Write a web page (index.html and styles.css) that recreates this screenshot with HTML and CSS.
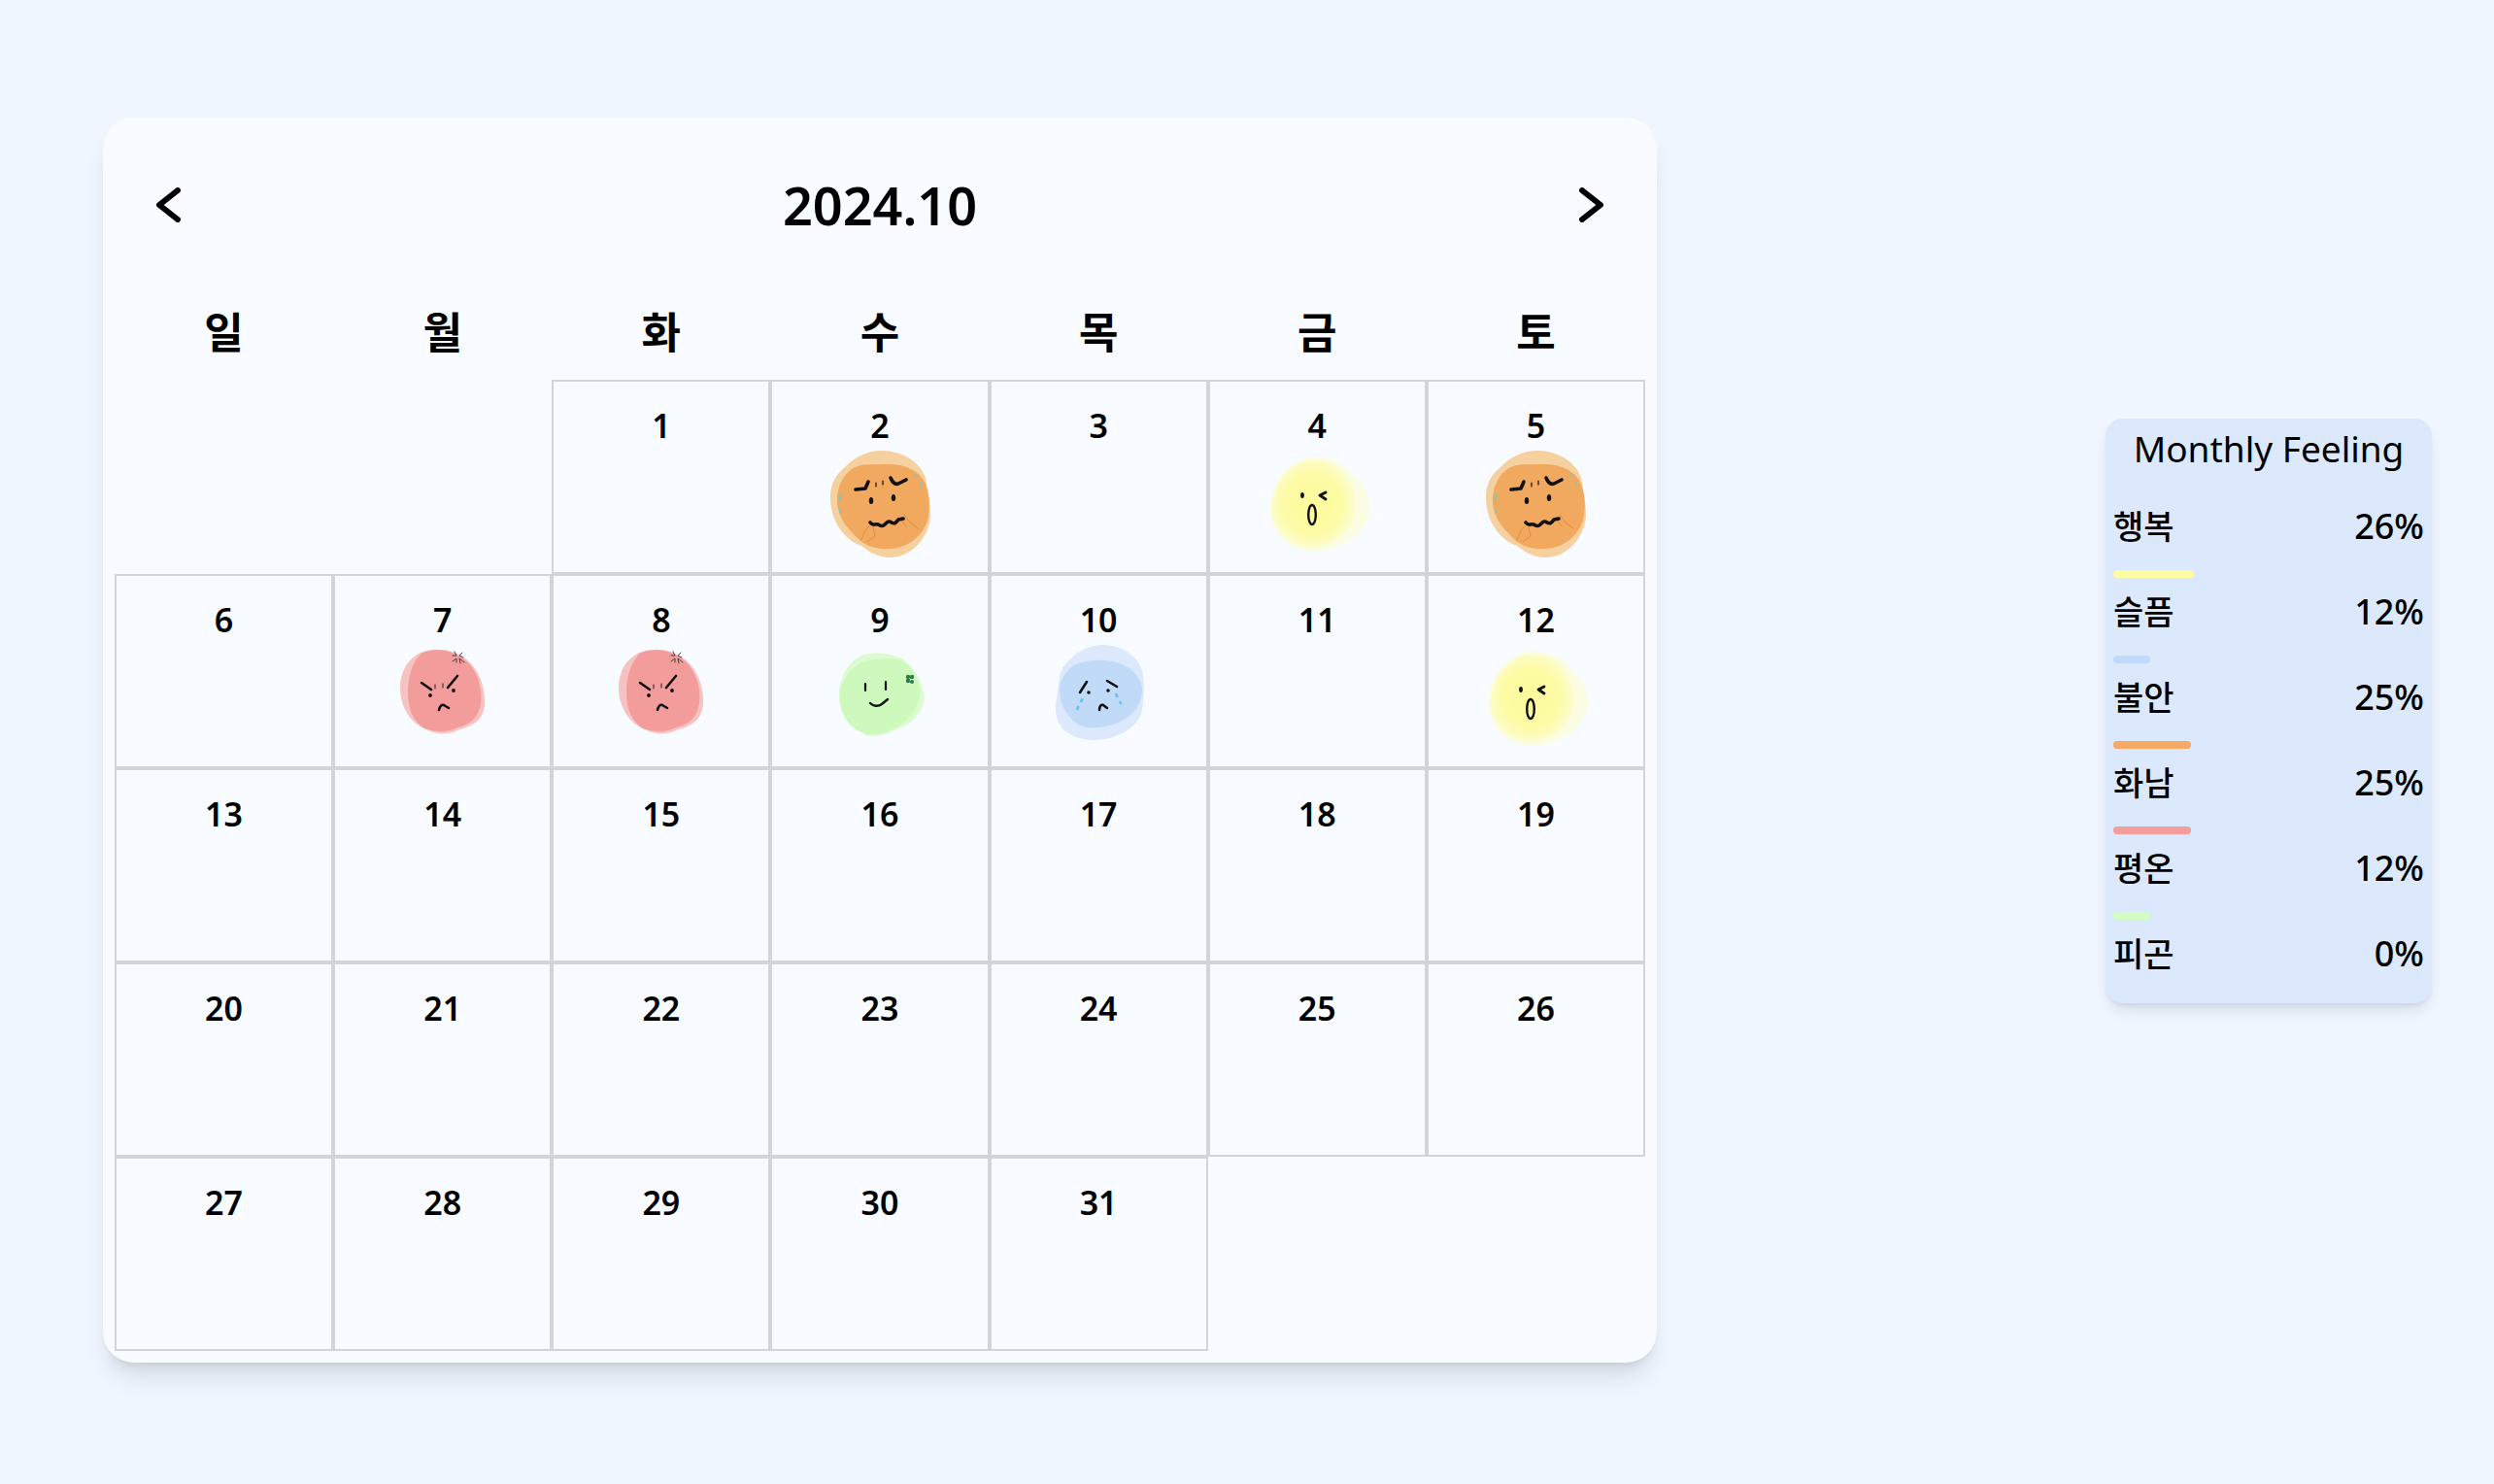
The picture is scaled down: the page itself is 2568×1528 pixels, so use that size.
FILE: index.html
```html
<!DOCTYPE html>
<html lang="ko">
<head>
<meta charset="utf-8">
<title>Monthly Feeling</title>
<link rel="stylesheet" href="styles.css">
</head>
<body>
<svg class="defs" width="0" height="0" aria-hidden="true">
  <defs>
    <radialGradient id="yellowGlow" cx="48%" cy="50%" r="55%">
      <stop offset="0" stop-color="#fdfb9e"/>
      <stop offset="0.6" stop-color="#fdfba4"/>
      <stop offset="0.85" stop-color="#fdfcc4"/>
      <stop offset="1" stop-color="#fbfde8"/>
    </radialGradient>
    <symbol id="f-anxious" viewBox="0 0 110 110">
      <path fill="#f6d09f" d="M57 0C78 0 97 12 102 28C104 40 107 52 107 68C106 88 88 110 66 110C52 110 44 104 36 98C18 92 4 72 4 48C4 34 10 24 19 17C30 6 42 0 57 0Z"/>
      <path fill="#f1a85f" d="M60 14C80 13 96 20 102 34C106 46 107 58 104 72C98 90 82 100 66 101C50 102 38 98 28 86C16 74 10 62 11 48C12 34 20 20 32 16C42 13 50 15 60 14Z"/>
      <g fill="none" stroke="#e08c3e" stroke-width="1" stroke-linecap="round">
        <path d="M36 92L40 82L44 78M42 94L50 88L48 78"/>
        <path d="M80 66L86 74L94 80M76 70L82 78"/>
      </g>
      <g fill="none" stroke="#111" stroke-linecap="round" stroke-linejoin="round">
        <path stroke-width="3.6" d="M30 40L40 39L43 32"/>
        <path stroke-width="3.6" d="M66 28C68 33 71 35 74 34L82 30"/>
        <path stroke-width="1.2" d="M51 33V37M58 31V35"/>
        <path stroke-width="3.6" d="M45 74C48 78 50 75 53 76S57 79 60 76S64 72 67 74S72 74 74 71L79 70"/>
      </g>
      <ellipse cx="46" cy="51.500" rx="2.200" ry="3.600" fill="#111"/>
      <ellipse cx="69" cy="48.500" rx="2.200" ry="3.600" fill="#111"/>
      <g fill="none" stroke="#7cc9cb" stroke-width="1.600" stroke-linecap="round">
        <path d="M15 45L13 52M14 61V64M91 25L93 27M97 33L98 36"/>
      </g>
    </symbol>
    <symbol id="f-happy" viewBox="0 0 110 110">
      <path fill="#fbfde2" d="M40 9C56 3 78 8 92 24C102 34 110 46 109 64C106 80 92 92 78 98C64 106 38 106 26 96C12 86 6 72 7 56C8 34 22 16 40 9Z"/>
      <path fill="url(#yellowGlow)" d="M40 11C56 5 76 10 84 24C94 36 98 50 94 68C90 84 72 96 54 100C36 102 18 90 10 72C4 50 18 20 40 11Z"/>
      <ellipse cx="40" cy="46" rx="1.900" ry="3" fill="#111"/>
      <path fill="none" stroke="#111" stroke-width="2.800" stroke-linecap="round" stroke-linejoin="round" d="M64 43L58 46L64 50"/>
      <ellipse cx="50" cy="66" rx="3.800" ry="10" fill="none" stroke="#111" stroke-width="2.400"/>
    </symbol>
    <symbol id="f-angry" viewBox="0 0 110 110">
      <path fill="#f6c3c2" d="M32 8C48 2 64 4 78 14C92 24 99 44 98 60C98 76 86 84 72 87C60 94 44 92 32 84C18 76 11 60 11 44C11 26 20 14 32 8Z"/>
      <path fill="#f29d9b" d="M34 8C48 3 64 5 76 14C90 24 96 44 94 60C92 74 84 82 70 85C60 90 48 90 36 86C24 78 19 66 19 48C19 32 24 16 34 8Z"/>
      <g fill="none" stroke="#111" stroke-linecap="round" stroke-linejoin="round">
        <path stroke-width="2.600" d="M33 39L43 46M60 44L70 32"/>
        <path stroke-width="0.900" d="M47 41V45M55 40V44"/>
        <path stroke-width="2.600" d="M51 67C52 63 54 61 56 62L61 65"/>
        <path stroke-width="0.900" stroke="#333" d="M67 7L69 11L65 11M75 8L72 11L76 13M65 17L69 14L69 18M77 18L72 14L73 19"/>
      </g>
      <circle cx="42" cy="52" r="1.900" fill="#111"/>
      <circle cx="66" cy="47" r="1.900" fill="#111"/>
    </symbol>
    <symbol id="f-calm" viewBox="0 0 110 110">
      <path fill="#dcfbd1" d="M36 11C48 6 64 8 78 14C90 22 100 40 101 54C100 70 88 82 70 88C58 94 46 96 36 90C22 84 13 70 13 52C13 34 22 18 36 11Z"/>
      <path fill="#cdf9bc" d="M36 18C46 14 56 15 64 14C78 12 90 24 96 42C98 58 92 72 74 84C58 92 46 96 36 90C22 84 14 70 14 54C14 38 24 24 36 18Z"/>
      <g fill="none" stroke="#111" stroke-linecap="round" stroke-linejoin="round">
        <path stroke-width="2.200" d="M40 40V47M61 38V46"/>
        <path stroke-width="2.400" d="M45 60C48 63 53 64 57 61L63 56"/>
      </g>
      <g fill="#2f7a4f">
        <circle cx="84" cy="33" r="2.200"/>
        <circle cx="88" cy="33" r="2.200"/>
        <circle cx="84" cy="37" r="2.200"/>
        <circle cx="88" cy="38" r="2"/>
      </g>
    </symbol>
    <symbol id="f-sad" viewBox="0 0 110 110">
      <path fill="#dce9fc" d="M56 0C74 -1 94 8 100 26C103 40 102 54 100 66C98 82 82 92 66 96C50 100 32 98 20 88C12 80 9 68 12 56C14 44 14 32 18 24C28 10 40 2 56 0Z"/>
      <path fill="#c0daf8" d="M30 21C42 15 56 15 70 17C86 20 98 32 100 44C100 60 94 70 78 79C62 86 46 88 34 82C22 74 15 60 15 46C15 36 22 26 30 21Z"/>
      <g fill="none" stroke="#111" stroke-linecap="round" stroke-linejoin="round">
        <path stroke-width="2.600" d="M43 38L36 49M64 37L74 43"/>
        <path stroke-width="2.600" d="M56 67C56 63 58 61 60 62L64 65"/>
      </g>
      <circle cx="45" cy="49" r="1.800" fill="#111"/>
      <circle cx="65" cy="47" r="1.800" fill="#111"/>
      <g fill="none" stroke="#63c4ec" stroke-width="2.600">
        <path d="M38.500 55L37 59M34.500 63L33 67M73 50L74.500 54M77 58L78.500 61"/>
      </g>
    </symbol>
  </defs>
</svg>

<main class="calendar">
  <header class="cal-head">
    <span class="nav-arrow"><svg viewBox="0 0 28 36" width="28" height="36"><path d="M24 3L5 18L24 33"/></svg></span>
    <h1 class="cal-title">2024.10</h1>
    <span class="nav-arrow"><svg viewBox="0 0 28 36" width="28" height="36"><path d="M4 3L23 18L4 33"/></svg></span>
  </header>
  <div class="week">
    <div class="week-day">일</div><div class="week-day">월</div><div class="week-day">화</div><div class="week-day">수</div><div class="week-day">목</div><div class="week-day">금</div><div class="week-day">토</div>
  </div>
  <div class="days">
    <div class="day day-empty"></div>
    <div class="day day-empty"></div>
    <div class="day"><span class="num">1</span></div>
    <div class="day"><span class="num">2</span><svg class="face"><use href="#f-anxious"/></svg></div>
    <div class="day"><span class="num">3</span></div>
    <div class="day"><span class="num">4</span><svg class="face"><use href="#f-happy"/></svg></div>
    <div class="day"><span class="num">5</span><svg class="face"><use href="#f-anxious"/></svg></div>
    <div class="day"><span class="num">6</span></div>
    <div class="day"><span class="num">7</span><svg class="face"><use href="#f-angry"/></svg></div>
    <div class="day"><span class="num">8</span><svg class="face"><use href="#f-angry"/></svg></div>
    <div class="day"><span class="num">9</span><svg class="face"><use href="#f-calm"/></svg></div>
    <div class="day"><span class="num">10</span><svg class="face"><use href="#f-sad"/></svg></div>
    <div class="day"><span class="num">11</span></div>
    <div class="day"><span class="num">12</span><svg class="face"><use href="#f-happy"/></svg></div>
    <div class="day"><span class="num">13</span></div>
    <div class="day"><span class="num">14</span></div>
    <div class="day"><span class="num">15</span></div>
    <div class="day"><span class="num">16</span></div>
    <div class="day"><span class="num">17</span></div>
    <div class="day"><span class="num">18</span></div>
    <div class="day"><span class="num">19</span></div>
    <div class="day"><span class="num">20</span></div>
    <div class="day"><span class="num">21</span></div>
    <div class="day"><span class="num">22</span></div>
    <div class="day"><span class="num">23</span></div>
    <div class="day"><span class="num">24</span></div>
    <div class="day"><span class="num">25</span></div>
    <div class="day"><span class="num">26</span></div>
    <div class="day"><span class="num">27</span></div>
    <div class="day"><span class="num">28</span></div>
    <div class="day"><span class="num">29</span></div>
    <div class="day"><span class="num">30</span></div>
    <div class="day"><span class="num">31</span></div>
    <div class="day day-empty"></div>
    <div class="day day-empty"></div>
  </div>
</main>

<aside class="stats">
  <h2 class="stats-title">Monthly Feeling</h2>
  <div class="stat"><div class="stat-line"><span>행복</span><span class="pct">26%</span></div><div class="bar bar-happy" style="width:26%"></div></div>
  <div class="stat"><div class="stat-line"><span>슬픔</span><span class="pct">12%</span></div><div class="bar bar-sad" style="width:12%"></div></div>
  <div class="stat"><div class="stat-line"><span>불안</span><span class="pct">25%</span></div><div class="bar bar-anxious" style="width:25%"></div></div>
  <div class="stat"><div class="stat-line"><span>화남</span><span class="pct">25%</span></div><div class="bar bar-angry" style="width:25%"></div></div>
  <div class="stat"><div class="stat-line"><span>평온</span><span class="pct">12%</span></div><div class="bar bar-calm" style="width:12%"></div></div>
  <div class="stat stat-last"><div class="stat-line"><span>피곤</span><span class="pct">0%</span></div></div>
</aside>
</body>
</html>
```

FILE: styles.css
```css
* { box-sizing: border-box; }

html, body { margin: 0; padding: 0; }

body {
  min-height: 100vh;
  background: #eff6ff;
  color: #000;
  font-family: "Noto Sans", "Noto Sans CJK KR", sans-serif;
  display: flex;
  justify-content: space-between;
  align-items: flex-start;
  padding: 121px 64px 0 106px;
  overflow: hidden;
}

.defs { position: absolute; }

.calendar {
  width: 1600px;
  height: 1282px;
  padding: 0 12px 12px;
  background: #f8fbff;
  border-radius: 32px;
  box-shadow: 0 20px 25px -5px rgba(0, 0, 0, 0.1), 0 8px 10px -6px rgba(0, 0, 0, 0.1);
}

.cal-head {
  height: 180px;
  display: flex;
  align-items: center;
  justify-content: space-between;
  padding: 0 41px;
}

.nav-arrow { display: flex; }

.nav-arrow svg path {
  fill: none;
  stroke: #000;
  stroke-width: 6;
  stroke-linecap: round;
  stroke-linejoin: round;
}

.cal-title {
  margin: 0;
  font-size: 54px;
  font-weight: 600;
  line-height: 1.5;
}

.week {
  display: grid;
  grid-template-columns: repeat(7, 1fr);
  height: 90px;
  padding-bottom: 12px;
}

.week-day {
  display: flex;
  align-items: center;
  justify-content: center;
  font-family: "Noto Sans CJK KR", sans-serif;
  font-size: 44px;
  font-weight: 700;
}

.days {
  display: grid;
  grid-template-columns: repeat(7, 1fr);
  grid-auto-rows: 200px;
}

.day {
  display: flex;
  flex-direction: column;
  align-items: center;
  padding-top: 20px;
  border: 2px solid #d1d5db;
}

.day-empty { border: 0; }

.num {
  font-size: 34px;
  line-height: 51px;
  font-weight: 600;
}

.face {
  width: 110px;
  height: 110px;
  flex: none;
}

.stats {
  width: 336px;
  padding: 4px 8px 24px;
  background: #dce8fb;
  border-radius: 18px;
  box-shadow: 0 10px 15px -3px rgba(0, 0, 0, 0.1), 0 4px 6px -4px rgba(0, 0, 0, 0.1);
  margin-top: 310px;
}

.stats-title {
  margin: 0 0 26px;
  font-size: 37px;
  font-weight: 400;
  line-height: 54px;
  text-align: center;
}

.stat-line {
  display: flex;
  justify-content: space-between;
  font-size: 34px;
  font-weight: 500;
  line-height: 54px;
  margin-bottom: 18px;
}

.stat-last .stat-line { margin-bottom: 0; }

.pct { font-size: 36px; }

.bar {
  height: 8px;
  border-radius: 4px;
  margin-bottom: 8px;
}

.bar-happy { background: #fdfca2; }
.bar-sad { background: #bfdafa; }
.bar-anxious { background: #f5a962; }
.bar-angry { background: #f49d9b; }
.bar-calm { background: #d3fdc3; }
```
